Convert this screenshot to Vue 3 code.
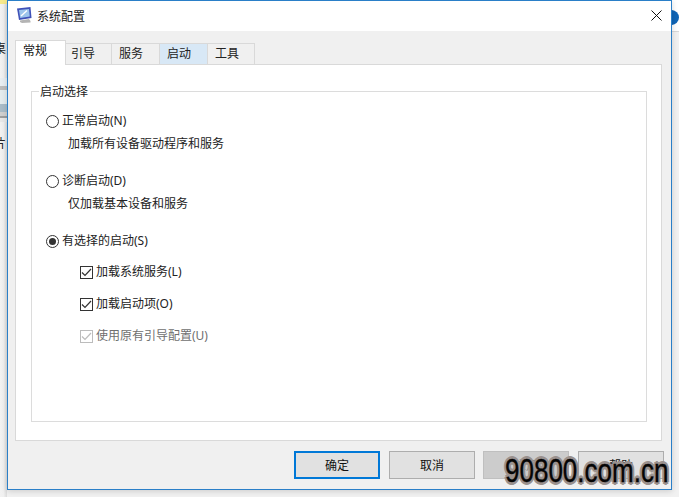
<script setup>
const tabs = [
  { label: '常规', active: true, w: 51, pad: 7 },
  { label: '引导', w: 46, pad: 5 },
  { label: '服务', w: 48, pad: 7 },
  { label: '启动', hover: true, w: 48, pad: 7 },
  { label: '工具', w: 47, pad: 7 }
]
const buttons = [
  { label: '确定', cls: 'primary' },
  { label: '取消', cls: '' },
  { label: '应用', cls: 'disabled' },
  { label: '帮助', cls: '' }
]
const checks = [
  { label: '加载系统服务(L)' },
  { label: '加载启动项(O)' },
  { label: '使用原有引导配置(U)', off: true }
]
</script>

<template>
  <div class="screen">
    <div class="behind-left">
      <span class="yellow"></span>
      <span class="frag f1">桌</span>
      <span class="lines"></span>
      <span class="frag f2">片</span>
    </div>
    <div class="behind-right">
      <span class="blob"></span>
    </div>

    <div class="window">
      <header class="titlebar">
        <svg class="appicon" width="18" height="18" viewBox="0 0 18 18">
          <path d="M1 2.5 14.5 1 15.5 12 3 14Z" fill="#3f51b8" />
          <path d="M3 4 13 3 13.8 10.6 4.2 12Z" fill="#9cc4ec" />
          <path d="M5 10 11 4.5" stroke="#fff" stroke-width="1.4" />
          <path d="M4 14.5 13 13 14.5 15 14.5 16.5 6 17 4 16Z" fill="#b4b4b4" />
        </svg>
        <span class="title">系统配置</span>
        <svg class="close" width="11" height="11" viewBox="0 0 11 11">
          <path d="M.5.5 10.5 10.5M10.5.5.5 10.5" stroke="#111" stroke-width="1" fill="none" />
        </svg>
      </header>

      <div class="body">
        <nav class="tabs">
          <div
            v-for="t in tabs"
            :key="t.label"
            class="tab"
            :class="{ active: t.active, hover: t.hover }"
            :style="{ width: t.w + 'px', paddingLeft: t.pad + 'px' }"
          >{{ t.label }}</div>
        </nav>

        <section class="panel">
          <fieldset class="group">
            <legend>启动选择</legend>

            <label class="row radio-row first">
              <span class="radio"></span>正常启动(N)
            </label>
            <p class="desc">加载所有设备驱动程序和服务</p>

            <label class="row radio-row">
              <span class="radio"></span>诊断启动(D)
            </label>
            <p class="desc">仅加载基本设备和服务</p>

            <label class="row radio-row">
              <span class="radio on"></span>有选择的启动(S)
            </label>

            <div class="checks">
              <label v-for="c in checks" :key="c.label" class="row check-row" :class="{ off: c.off }">
                <span class="check">
                  <svg width="11" height="11" viewBox="0 0 11 11">
                    <path d="M1 5.5 4 8.5 10 2" fill="none" stroke="currentColor" stroke-width="1.2" />
                  </svg>
                </span>{{ c.label }}
              </label>
            </div>
          </fieldset>
        </section>

        <footer class="buttons">
          <div v-for="b in buttons" :key="b.label" class="btn" :class="b.cls">{{ b.label }}</div>
        </footer>
      </div>
    </div>

    <div class="watermark"><span>90800.com.cn</span></div>
  </div>
</template>

<style>
html, body { margin: 0; overflow: hidden; background: #f1f1f1; }
</style>

<style scoped>
.screen {
  position: relative;
  width: 679px;
  height: 497px;
  overflow: hidden;
  background: #f1f1f1;
  padding: 0 7px 7px 7px;
  box-sizing: border-box;
  font-family: "Noto Sans", "Noto Sans CJK SC", sans-serif;
  font-size: 12px;
  color: #1a1a1a;
}

.behind-left {
  position: absolute;
  left: 0;
  top: 0;
  width: 7px;
  height: 497px;
  background: linear-gradient(90deg, #f2f2f2 0, #f0f0f0 50%, #dcdcdc 100%);
  overflow: hidden;
}
.yellow {
  position: absolute;
  left: 0;
  top: 0;
  width: 7px;
  height: 4px;
  background: #f7e98c;
}
.frag {
  position: absolute;
  left: -6px;
  font-size: 12px;
  line-height: 14px;
  color: #222;
}
.f1 { top: 42px; }
.f2 { top: 137px; }
.lines {
  position: absolute;
  left: 0;
  top: 78px;
  width: 7px;
  height: 44px;
  background: linear-gradient(180deg, #e8eef2 0 8px, #bdbdbd 8px 12px, #e4ecee 12px 26px, #a9bcc8 26px 34px, #d0d0d0 34px 38px, #9e9e9e 38px 40px, #e8e8e8 40px);
}

.behind-right {
  position: absolute;
  right: 0;
  top: 0;
  width: 7px;
  height: 497px;
  background: #f1f1f1;
  overflow: hidden;
}
.behind-right::before {
  content: "";
  position: absolute;
  left: 0;
  right: 0;
  top: 0;
  height: 31px;
  background: #fff;
  border-bottom: 1px solid #d8d8d8;
}
.blob {
  position: absolute;
  left: -8px;
  top: 10px;
  width: 15px;
  height: 15px;
  border-radius: 50%;
  background: #0f65b6;
}

.window {
  position: relative;
  box-sizing: border-box;
  height: 490px;
  border: 1px solid #2a7fc8;
  background: #f0f0f0;
  box-shadow: 0 1px 6px rgba(0, 0, 0, .16);
  display: flex;
  flex-direction: column;
}

.titlebar {
  height: 30px;
  flex: none;
  background: #fff;
  display: flex;
  align-items: center;
  padding-left: 8px;
  padding-right: 9px;
}
.appicon { flex: none; margin-top: -2px; }
.title { margin-left: 3px; color: #222; margin-top: -1px; }
.close { margin-left: auto; margin-top: -1px; }

.body {
  flex: 1;
  display: flex;
  flex-direction: column;
  padding: 9px 9px 0 7px;
  min-height: 0;
}

.tabs {
  display: flex;
  align-items: flex-end;
  height: 24px;
  flex: none;
  position: relative;
  z-index: 1;
}
.tab {
  box-sizing: border-box;
  height: 21px;
  border: 1px solid #d9d9d9;
  border-bottom: none;
  border-left: none;
  background: #f0f0f0;
  line-height: 20px;
  color: #222;
  flex: none;
}
.tab.hover { background: #d8e8f6; }
.tab.active {
  height: 25px;
  margin-bottom: -1px;
  background: #fff;
  border-left: 1px solid #d9d9d9;
  line-height: 20px;
  color: #111;
}

.panel {
  box-sizing: border-box;
  height: 377px;
  flex: none;
  background: #fff;
  border: 1px solid #d9d9d9;
  padding: 19px 14px 0 15px;
}

.group {
  box-sizing: border-box;
  height: 338px;
  margin: 0;
  padding: 0 0 0 14px;
  border: 1px solid #dcdcdc;
  min-width: 0;
}
legend {
  padding: 0 2px 0 1px;
  margin-left: -7px;
  line-height: 16px;
  height: 14px;
  color: #222;
  font-size: 12px;
}

.row {
  display: flex;
  align-items: center;
  height: 16px;
  line-height: 16px;
  color: #222;
}
.radio-row { margin-top: 21px; }
.radio-row.first { margin-top: 15px; }
.radio {
  box-sizing: border-box;
  width: 13px;
  height: 13px;
  border: 1px solid #333;
  border-radius: 50%;
  margin-right: 3px;
  flex: none;
  display: flex;
  align-items: center;
  justify-content: center;
}
.radio.on::after {
  content: "";
  width: 7px;
  height: 7px;
  border-radius: 50%;
  background: #333;
}
.desc {
  margin: 7px 0 0 22px;
  height: 16px;
  line-height: 16px;
  color: #222;
}

.checks { margin: 15px 0 0 34px; display: flex; flex-direction: column; gap: 16px; }
.check {
  box-sizing: border-box;
  width: 13px;
  height: 13px;
  border: 1px solid #333;
  margin-right: 3px;
  flex: none;
  color: #333;
  display: flex;
  align-items: center;
  justify-content: center;
}
.check svg { display: block; }
.check-row.off { color: #6f6f6f; }
.check-row.off .check { border-color: #bcbcbc; color: #bcbcbc; }

.buttons {
  display: flex;
  gap: 9px;
  justify-content: flex-end;
  margin-top: 10px;
  margin-right: -2px;
}
.btn {
  box-sizing: border-box;
  width: 86px;
  height: 28px;
  border: 1px solid #adadad;
  background: #e1e1e1;
  display: flex;
  align-items: center;
  justify-content: center;
  color: #111;
}
.btn.primary { border: 2px solid #0078d7; }
.btn.disabled { background: #cccccc; border-color: #bfbfbf; color: #8a8a8a; margin-left: -1px; }

.watermark {
  position: absolute;
  left: 505px;
  top: 451px;
  width: 166px;
  height: 38px;
  line-height: 38px;
  white-space: nowrap;
  font-family: "Liberation Sans", sans-serif;
  font-size: 34px;
  color: #050505;
}
.watermark span {
  display: inline-block;
  transform: scaleX(.765);
  transform-origin: left center;
  -webkit-text-stroke: .4px #050505;
  text-shadow:
    3px 0 0 #9a918e, -3px 0 0 #9a918e, 0 3px 0 #9a918e, 0 -3px 0 #9a918e,
    2px 2px 0 #9a918e, -2px 2px 0 #9a918e, 2px -2px 0 #9a918e, -2px -2px 0 #9a918e;
}
</style>
